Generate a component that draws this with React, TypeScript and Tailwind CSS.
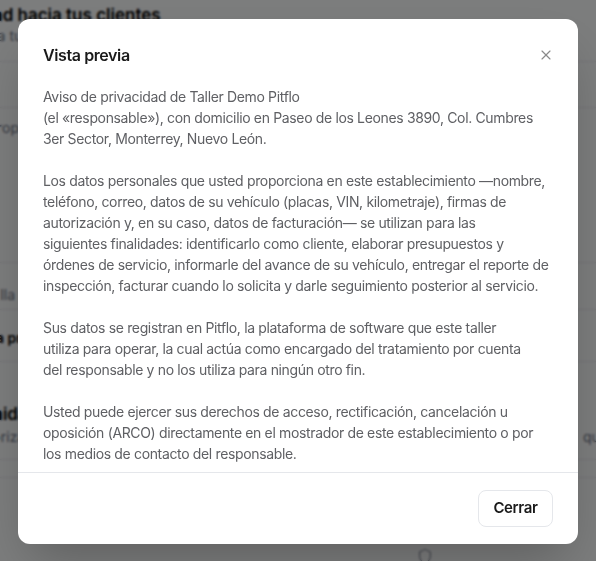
import { X, Shield } from "lucide-react";

const paragraphs = [
  "Aviso de privacidad de Taller Demo Pitflo\n(el «responsable»), con domicilio en Paseo de los Leones 3890, Col. Cumbres\n3er Sector, Monterrey, Nuevo León.",
  "Los datos personales que usted proporciona en este establecimiento —nombre,\nteléfono, correo, datos de su vehículo (placas, VIN, kilometraje), firmas de\nautorización y, en su caso, datos de facturación— se utilizan para las\nsiguientes finalidades: identificarlo como cliente, elaborar presupuestos y\nórdenes de servicio, informarle del avance de su vehículo, entregar el reporte de\ninspección, facturar cuando lo solicita y darle seguimiento posterior al servicio.",
  "Sus datos se registran en Pitflo, la plataforma de software que este taller\nutiliza para operar, la cual actúa como encargado del tratamiento por cuenta\ndel responsable y no los utiliza para ningún otro fin.",
  "Usted puede ejercer sus derechos de acceso, rectificación, cancelación u\noposición (ARCO) directamente en el mostrador de este establecimiento o por\nlos medios de contacto del responsable.",
  "Para conocer la versión completa de este aviso de privacidad, solicítela\nen el mostrador o consulte los medios de contacto del responsable.",
];

function BackgroundPage() {
  return (
    <div className="h-[561px] overflow-hidden bg-gray-50 text-gray-900">
      {/* Section header */}
      <div className="h-[62px] border-b border-gray-200 pt-[4px]">
        <h2 className="-ml-[74px] text-[17px] font-semibold leading-[22px] text-black">
          Privacidad hacia tus clientes
        </h2>
        <p className="-ml-[60px] text-sm leading-5 text-gray-500">
          Configura tus avisos de privacidad
        </p>
      </div>
      <div className="h-[46px] border-b border-gray-200" />
      <div className="h-[155px] border-b border-gray-200 pt-[10px]">
        <p className="-ml-[52px] text-sm text-gray-500">Texto propio del aviso</p>
      </div>
      <div className="h-[47px] border-b border-gray-200 pt-[22px]">
        <p className="-ml-[36px] text-sm text-gray-500">Plantilla</p>
      </div>
      <div className="h-[52px] border-b border-gray-200 pt-[18px]">
        <p className="-ml-[4px] text-sm font-semibold text-black">a previa</p>
      </div>
      <div className="flex h-[98px] items-end justify-between border-b border-gray-200 pb-[12px]">
        <div>
          <h3 className="-ml-[20px] text-[17px] font-semibold text-black">Unidade</h3>
          <p className="-ml-[30px] text-sm text-gray-500">Autorizaciones</p>
        </div>
        <p className="-mr-[12px] text-sm text-gray-500">que</p>
      </div>
      <div className="h-[18px] border-b border-gray-200" />
      <div className="flex h-[86px] items-end justify-center pl-[254px]">
        <Shield className="h-4 w-4 text-gray-500" strokeWidth={1.5} />
      </div>
    </div>
  );
}

export default function App() {
  return (
    <div className="relative h-[561px] w-full overflow-hidden font-['Inter',sans-serif]">
      <BackgroundPage />

      <div className="fixed inset-0 flex items-center justify-center bg-black/50 backdrop-blur-[1px]">
        <div className="mt-[1px] w-[560px] overflow-hidden rounded-xl bg-white shadow-2xl">
          {/* Header */}
          <div className="flex items-center justify-between px-[25px] pt-[22px] pb-[17px]">
            <h2 className="text-base font-semibold leading-7 tracking-tight text-[#1a1a1a]">
              Vista previa
            </h2>
            <button className="-mr-[5px] flex h-6 w-6 items-center justify-center text-[#8a8a8a]">
              <X className="h-4 w-4" strokeWidth={1.75} />
            </button>
          </div>

          {/* Body */}
          <div className="h-[386px] overflow-hidden px-[25px]">
            <div className="flex flex-col gap-[21px] text-[14px] leading-[21px] tracking-tight text-[#5f6064]">
              {paragraphs.map((p, i) => (
                <p key={i} className="whitespace-pre">
                  {p}
                </p>
              ))}
            </div>
          </div>

          {/* Footer */}
          <div className="flex justify-end border-t border-gray-200 px-[25px] py-[17px]">
            <button className="h-[37px] w-[75px] rounded-lg border border-gray-200 text-[15px] font-semibold tracking-tight text-[#1a1a1a]">
              Cerrar
            </button>
          </div>
        </div>
      </div>
    </div>
  );
}
